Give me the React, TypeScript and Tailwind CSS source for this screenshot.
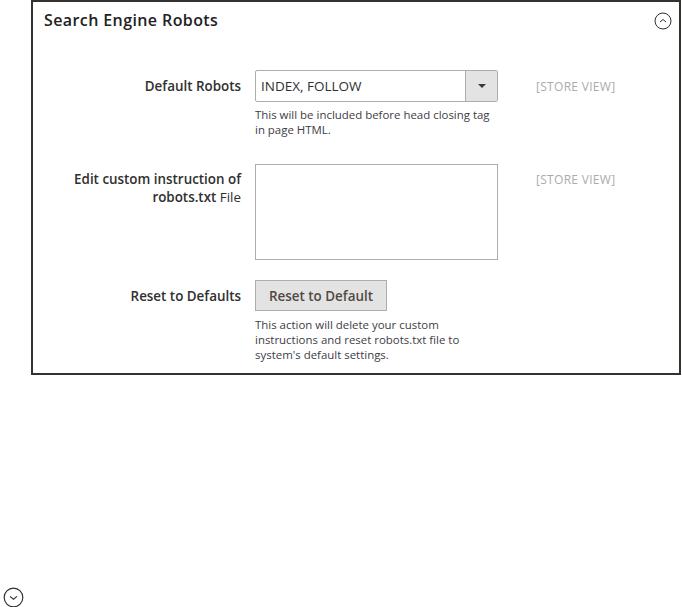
const font = { fontFamily: '"Open Sans", sans-serif' };

function Row({ label, children, scope, className, scopeTop }: { label: React.ReactNode; children: React.ReactNode; scope?: boolean; className?: string; scopeTop?: string }) {
  return (
    <div className={`flex ${className ?? ''}`}>
      <div className="w-[197px] shrink-0 pt-[7px] text-right text-[13.4px] leading-[18px] font-semibold text-[#303030]">{label}</div>
      <div className="ml-[14px] w-[243px] shrink-0">{children}</div>
      {scope && <div className={`ml-[38px] text-[12px] leading-[18px] tracking-[0.3px] text-[#ababab] ${scopeTop ?? 'pt-[8px]'}`}>[STORE VIEW]</div>}
    </div>
  );
}

function Circle({ up, className, size }: { up: boolean; className: string; size: number }) {
  return (
    <svg className={className} width={size} height={size} viewBox="0 0 18 18" fill="none">
      <circle cx="9" cy="9" r="8" stroke="#303030" strokeWidth="1" />
      <path d={up ? 'M6 10 L9 7.5 L12 10' : 'M6 8 L9 10.5 L12 8'} stroke="#303030" strokeWidth="1" />
    </svg>
  );
}

export default function App() {
  return (
    <div className="h-[607px] w-[682px] overflow-hidden bg-white" style={font}>
      <div className="ml-[31px] h-[375px] w-[650px] border-2 border-[#333230] pl-[11px] pr-[7px]">
        <div className="flex h-[68px] items-start justify-between pt-[7px]">
          <div className="text-[16px] leading-[22px] font-semibold tracking-[0.4px] text-[#222]">Search Engine Robots</div>
          <Circle up size={18} className="mt-[3px]" />
        </div>
        <Row label="Default Robots" scope>
          <div className="flex h-[32px] items-center rounded-[2px] border border-[#adadad] pl-[5px] text-[13.5px] leading-[18px] text-[#303030]">
            <span className="flex-1">INDEX, FOLLOW</span>
            <span className="flex h-full w-[32px] items-center justify-center border-l border-[#adadad] bg-[#e3e3e3]">
              <span className="h-0 w-0 border-x-[4px] border-t-[4px] border-x-transparent border-t-[#41362f]" />
            </span>
          </div>
          <p className="mt-[5px] text-[11.45px] leading-[15px] text-[#3d3d45]">This will be included before head closing tag<br />in page HTML.</p>
        </Row>
        <Row className="mt-[27px]" scopeTop="pt-[7px]" label={<><span className="relative -top-[1px]">Edit custom instruction of</span><br /><span className="relative -top-[1px]">robots.txt <span className="font-normal">File</span></span></>} scope>
          <div className="h-[96px] border border-[#adadad] bg-white" />
        </Row>
        <Row className="mt-[20px]" label="Reset to Defaults">
          <div className="flex h-[31px] w-[132px] items-center justify-center border border-[#adadad] bg-[#e3e3e3] pt-[1px] text-[13.4px] font-semibold text-[#514943]">Reset to Default</div>
          <p className="mt-[6px] text-[11.45px] leading-[15px] text-[#3d3d45]">This action will delete your custom<br />instructions and reset robots.txt file to<br />system's default settings.</p>
        </Row>
      </div>
      <div className="mt-[212px] ml-[3px]">
        <Circle up={false} size={21} className="block" />
      </div>
    </div>
  );
}
